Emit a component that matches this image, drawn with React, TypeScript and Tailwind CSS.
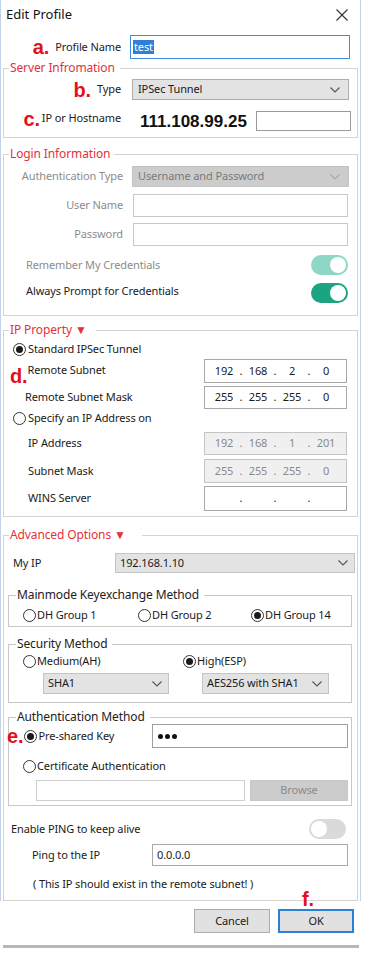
import React from "react";

const Chevron = ({ c = "#555" }: { c?: string }) => (
  <svg width="10" height="6" viewBox="0 0 10 6">
    <polyline points="0.5,0.5 5,5 9.5,0.5" fill="none" stroke={c} strokeWidth="1.1" />
  </svg>
);

const Radio = ({ on }: { on?: boolean }) => (
  <span className="flex h-[13px] w-[13px] shrink-0 items-center justify-center rounded-full border border-[#333] bg-white">
    {on && <span className="h-[7px] w-[7px] rounded-full bg-[#1a1a1a]" />}
  </span>
);

const Toggle = ({ kind }: { kind: "on" | "light" | "off" }) => {
  const bg = kind === "on" ? "bg-[#1ba382]" : kind === "light" ? "bg-[#8ed7c4]" : "bg-[#dadada]";
  return (
    <div className={`flex h-[20px] w-[37px] items-center rounded-full px-[2px] ${bg} ${kind === "off" ? "justify-start" : "justify-end"}`}>
      <div className="h-[16px] w-[16px] rounded-full bg-white" />
    </div>
  );
};

const Mark = ({ t }: { t: string }) => (
  <span className="font-['Liberation_Sans',Arial,sans-serif] text-[20px] font-bold leading-none text-[#e3101b]">{t}</span>
);

const IpBox = ({ parts, gray }: { parts: string[]; gray?: boolean }) => (
  <div
    className={`flex h-full w-[143px] items-center border pl-[6px] ${
      gray ? "border-[#c4c4c4] bg-[#f0f0f0] text-[#8a8a8a]" : "border-[#a8a8a8] bg-white text-[#1a1a1a]"
    }`}
  >
    {parts.map((p, i) => (
      <React.Fragment key={i}>
        {i > 0 && <span className="w-[8px] text-center">.</span>}
        <span className="w-[26px] text-center">{p}</span>
      </React.Fragment>
    ))}
  </div>
);

const Legend = ({ children, extra }: { children: React.ReactNode; extra: string }) => (
  <legend className={`text-[12px] leading-[14px] text-[#e5313a] ${extra}`}>{children}</legend>
);

const SubLegend = ({ children }: { children: React.ReactNode }) => (
  <legend className="ml-[7px] pl-[1px] pr-[5px] text-[12px] leading-[14px] text-[#222]">{children}</legend>
);

export default function App() {
  return (
    <div className="relative h-[953px] w-[367px] overflow-hidden bg-white font-['Noto_Sans',sans-serif] text-[11px] tracking-[-0.12px] text-[#1a1a1a]">
      {/* window */}
      <div className="w-[361px] border-l border-r border-[#c0d3e9]">
        {/* title bar */}
        <div className="flex h-[30px] items-center justify-between pl-[5px] pr-[12px] tracking-normal">
          <span className="text-[13px] text-[#111]">Edit Profile</span>
          <svg width="12" height="12" viewBox="0 0 12 12">
            <path d="M0.5 0.5 L11.5 11.5 M11.5 0.5 L0.5 11.5" stroke="#333" strokeWidth="1.1" />
          </svg>
        </div>

        {/* row a */}
        <div className="mt-[5px] flex h-[24px] items-center">
          <div className="flex w-[120px] items-center justify-end gap-[6px]">
            <Mark t="a." />
            <span className="text-[#222]">Profile Name</span>
          </div>
          <div className="ml-[9px] flex h-full w-[220px] items-center border border-[#3d8ee0] bg-white pl-[2px]">
            <span className="bg-[#2f7fd6] px-[1px] leading-[14px] text-white">test</span>
          </div>
        </div>

        {/* Server Information */}
        <fieldset className="ml-[2px] mt-[2px] w-[355px] border border-[#d4d4d4] pb-[6px]">
          <Legend extra="ml-[5px] px-[1px] pr-[5px]">Server Infromation</Legend>
          <div className="mt-[4px] flex h-[21px] items-center">
            <div className="flex w-[117px] items-center justify-end gap-[6px]">
              <Mark t="b." />
              <span className="text-[#222]">Type</span>
            </div>
            <div className="ml-[11px] flex h-full w-[217px] items-center justify-between border border-[#adadad] bg-[#e3e3e3] pl-[5px] pr-[8px]">
              <span>IPSec Tunnel</span>
              <Chevron />
            </div>
          </div>
          <div className="mt-[11px] flex h-[20px] items-center">
            <div className="-mt-[5px] flex w-[117px] items-center justify-end gap-[2px]">
              <Mark t="c." />
              <span className="text-[#222]">IP or Hostname</span>
            </div>
            <span className="ml-[19px] mt-[2px] font-['Liberation_Sans',Arial,sans-serif] text-[17px] font-bold tracking-normal text-[#111]">
              111.108.99.25
            </span>
            <div className="ml-auto mr-[6px] h-full w-[95px] border border-[#9a9a9a] bg-white" />
          </div>
        </fieldset>

        {/* Login Information */}
        <fieldset className="ml-[2px] mt-[9px] w-[355px] border border-[#d4d4d4] pb-[12px]">
          <Legend extra="ml-[5px] px-[1px] pr-[4px]">Login Information</Legend>
          <div className="mt-[5px] flex h-[21px] items-center">
            <div className="w-[119px] text-right text-[#8c8c8c]">Authentication Type</div>
            <div className="ml-[9px] flex h-full w-[217px] items-center justify-between border border-[#c4c4c4] bg-[#cccccc] pl-[5px] pr-[8px] text-[#7a7a7a]">
              <span>Username and Password</span>
              <Chevron c="#a8a8a8" />
            </div>
          </div>
          <div className="mt-[7px] flex h-[23px] items-center">
            <div className="w-[119px] text-right text-[#8c8c8c]">User Name</div>
            <div className="ml-[10px] h-full w-[215px] border border-[#c9c9c9] bg-white" />
          </div>
          <div className="mt-[6px] flex h-[23px] items-center">
            <div className="w-[119px] text-right text-[#8c8c8c]">Password</div>
            <div className="ml-[10px] h-full w-[215px] border border-[#c9c9c9] bg-white" />
          </div>
          <div className="mt-[9px] flex h-[20px] items-center justify-between pl-[22px] pr-[9px]">
            <span className="text-[#8c8c8c]">Remember My Credentials</span>
            <Toggle kind="light" />
          </div>
          <div className="mt-[8px] flex h-[20px] items-center justify-between pl-[22px] pr-[9px]">
            <span className="-mt-[3px] text-[#222]">Always Prompt for Credentials</span>
            <Toggle kind="on" />
          </div>
        </fieldset>

        {/* IP Property */}
        <fieldset className="ml-[2px] mt-[7px] w-[355px] border border-[#d4d4d4] pb-[5px]">
          <Legend extra="ml-[5px] px-[1px] pr-[9px]">IP Property ▼</Legend>
          <div className="ml-[9px] mt-[4px] flex h-[16px] items-center gap-[2px]">
            <Radio on />
            <span>Standard IPSec Tunnel</span>
          </div>
          <div className="mt-[2px] flex h-[24px] items-start">
            <div className="ml-[6px] flex w-[194px] items-start">
              <span className="mt-[7px]">
                <Mark t="d." />
              </span>
              <span className="mt-[3px]">Remote Subnet</span>
            </div>
            <IpBox parts={["192", "168", "2", "0"]} />
          </div>
          <div className="mt-[3px] flex h-[23px] items-center">
            <div className="ml-[21px] w-[179px]">Remote Subnet Mask</div>
            <IpBox parts={["255", "255", "255", "0"]} />
          </div>
          <div className="ml-[9px] mt-[1px] flex h-[16px] items-center gap-[2px]">
            <Radio />
            <span>Specify an IP Address on</span>
          </div>
          <div className="mt-[6px] flex h-[23px] items-center">
            <div className="ml-[24px] w-[176px]">IP Address</div>
            <IpBox parts={["192", "168", "1", "201"]} gray />
          </div>
          <div className="mt-[4px] flex h-[24px] items-center">
            <div className="ml-[24px] w-[176px]">Subnet Mask</div>
            <IpBox parts={["255", "255", "255", "0"]} gray />
          </div>
          <div className="mt-[3px] flex h-[25px] items-center">
            <div className="ml-[24px] w-[176px]">WINS Server</div>
            <IpBox parts={["", "", "", ""]} />
          </div>
        </fieldset>

        {/* Advanced Options */}
        <fieldset className="ml-[2px] mt-[11px] w-[355px] border border-[#d4d4d4] pb-[8px]">
          <Legend extra="ml-[5px] px-[1px] pr-[16px]">Advanced Options ▼</Legend>
          <div className="mt-[11px] flex h-[20px] items-center">
            <div className="ml-[9px] w-[102px]">My IP</div>
            <div className="flex h-full w-[240px] items-center justify-between border border-[#c4c4c4] bg-[#e3e3e3] pl-[4px] pr-[6px]">
              <span>192.168.1.10</span>
              <Chevron />
            </div>
          </div>

          <fieldset className="ml-[4px] mt-[15px] w-[344px] border border-[#c8c8c8] pb-[3px]">
            <SubLegend>Mainmode Keyexchange Method</SubLegend>
            <div className="mt-[5px] flex h-[16px] items-center">
              <div className="ml-[14px] flex w-[115px] items-center gap-[1px]">
                <Radio />
                <span>DH Group 1</span>
              </div>
              <div className="flex w-[113px] items-center gap-[1px]">
                <Radio />
                <span>DH Group 2</span>
              </div>
              <div className="flex items-center gap-[1px]">
                <Radio on />
                <span>DH Group 14</span>
              </div>
            </div>
          </fieldset>

          <fieldset className="ml-[4px] mt-[10px] w-[344px] border border-[#c8c8c8] pb-[8px]">
            <SubLegend>Security Method</SubLegend>
            <div className="mt-[2px] flex h-[16px] items-center">
              <div className="ml-[14px] flex w-[160px] items-center gap-[1px]">
                <Radio />
                <span>Medium(AH)</span>
              </div>
              <div className="flex items-center gap-[1px]">
                <Radio on />
                <span>High(ESP)</span>
              </div>
            </div>
            <div className="mt-[4px] flex h-[21px] items-center">
              <div className="ml-[34px] flex h-full w-[126px] items-center justify-between border border-[#c4c4c4] bg-[#e3e3e3] pl-[4px] pr-[6px]">
                <span>SHA1</span>
                <Chevron />
              </div>
              <div className="ml-[33px] flex h-full w-[127px] items-center justify-between border border-[#c4c4c4] bg-[#e3e3e3] pl-[4px] pr-[6px]">
                <span>AES256 with SHA1</span>
                <Chevron />
              </div>
            </div>
          </fieldset>

          <fieldset className="ml-[4px] mt-[7px] w-[344px] border border-[#c8c8c8] pb-[4px]">
            <SubLegend>Authentication Method</SubLegend>
            <div className="flex h-[24px] items-center">
              <div className="-ml-[2px] flex w-[145px] items-center">
                <Mark t="e." />
                <span className="ml-[1px] flex items-center gap-[1px]">
                  <Radio on />
                  <span>Pre-shared Key</span>
                </span>
              </div>
              <div className="flex h-full w-[196px] items-center gap-[2px] border border-[#9f9f9f] bg-white pl-[5px]">
                <span className="h-[5px] w-[5px] rounded-full bg-[#111]" />
                <span className="h-[5px] w-[5px] rounded-full bg-[#111]" />
                <span className="h-[5px] w-[5px] rounded-full bg-[#111]" />
              </div>
            </div>
            <div className="ml-[14px] mt-[10px] flex h-[16px] items-center gap-[1px]">
              <Radio />
              <span>Certificate Authentication</span>
            </div>
            <div className="mt-[6px] flex h-[21px] items-center">
              <div className="ml-[27px] h-full w-[209px] border border-[#cfcfcf] bg-white" />
              <div className="ml-[5px] flex h-full w-[98px] items-center justify-center border border-[#c8c8c8] bg-[#cccccc] text-[#8a8a8a]">
                Browse
              </div>
            </div>
          </fieldset>

          <div className="mt-[13px] flex h-[20px] items-center justify-between pl-[7px] pr-[11px]">
            <span>Enable PING to keep alive</span>
            <Toggle kind="off" />
          </div>
          <div className="mt-[5px] flex h-[22px] items-center">
            <div className="ml-[28px] w-[120px]">Ping to the IP</div>
            <div className="flex h-full w-[196px] items-center border border-[#a8a8a8] bg-white pl-[4px]">0.0.0.0</div>
          </div>
          <div className="ml-[29px] mt-[10px] flex h-[16px] items-center">( This IP should exist in the remote subnet! )</div>
        </fieldset>
      </div>

      {/* annotation f. */}
      <div className="absolute left-[302px] top-[889px]">
        <Mark t="f." />
      </div>

      {/* buttons */}
      <div className="mt-[8px] flex h-[24px] justify-end gap-[8px] pr-[13px]">
        <div className="flex h-full w-[76px] items-center justify-center border border-[#adadad] bg-[#e1e1e1]">Cancel</div>
        <div className="flex h-full w-[76px] items-center justify-center border-2 border-[#2b7fd4] bg-[#e1e1e1]">OK</div>
      </div>

      <div className="ml-[3px] mt-[12px] h-[3px] w-[356px] bg-[#b7b7b7]" />
    </div>
  );
}
